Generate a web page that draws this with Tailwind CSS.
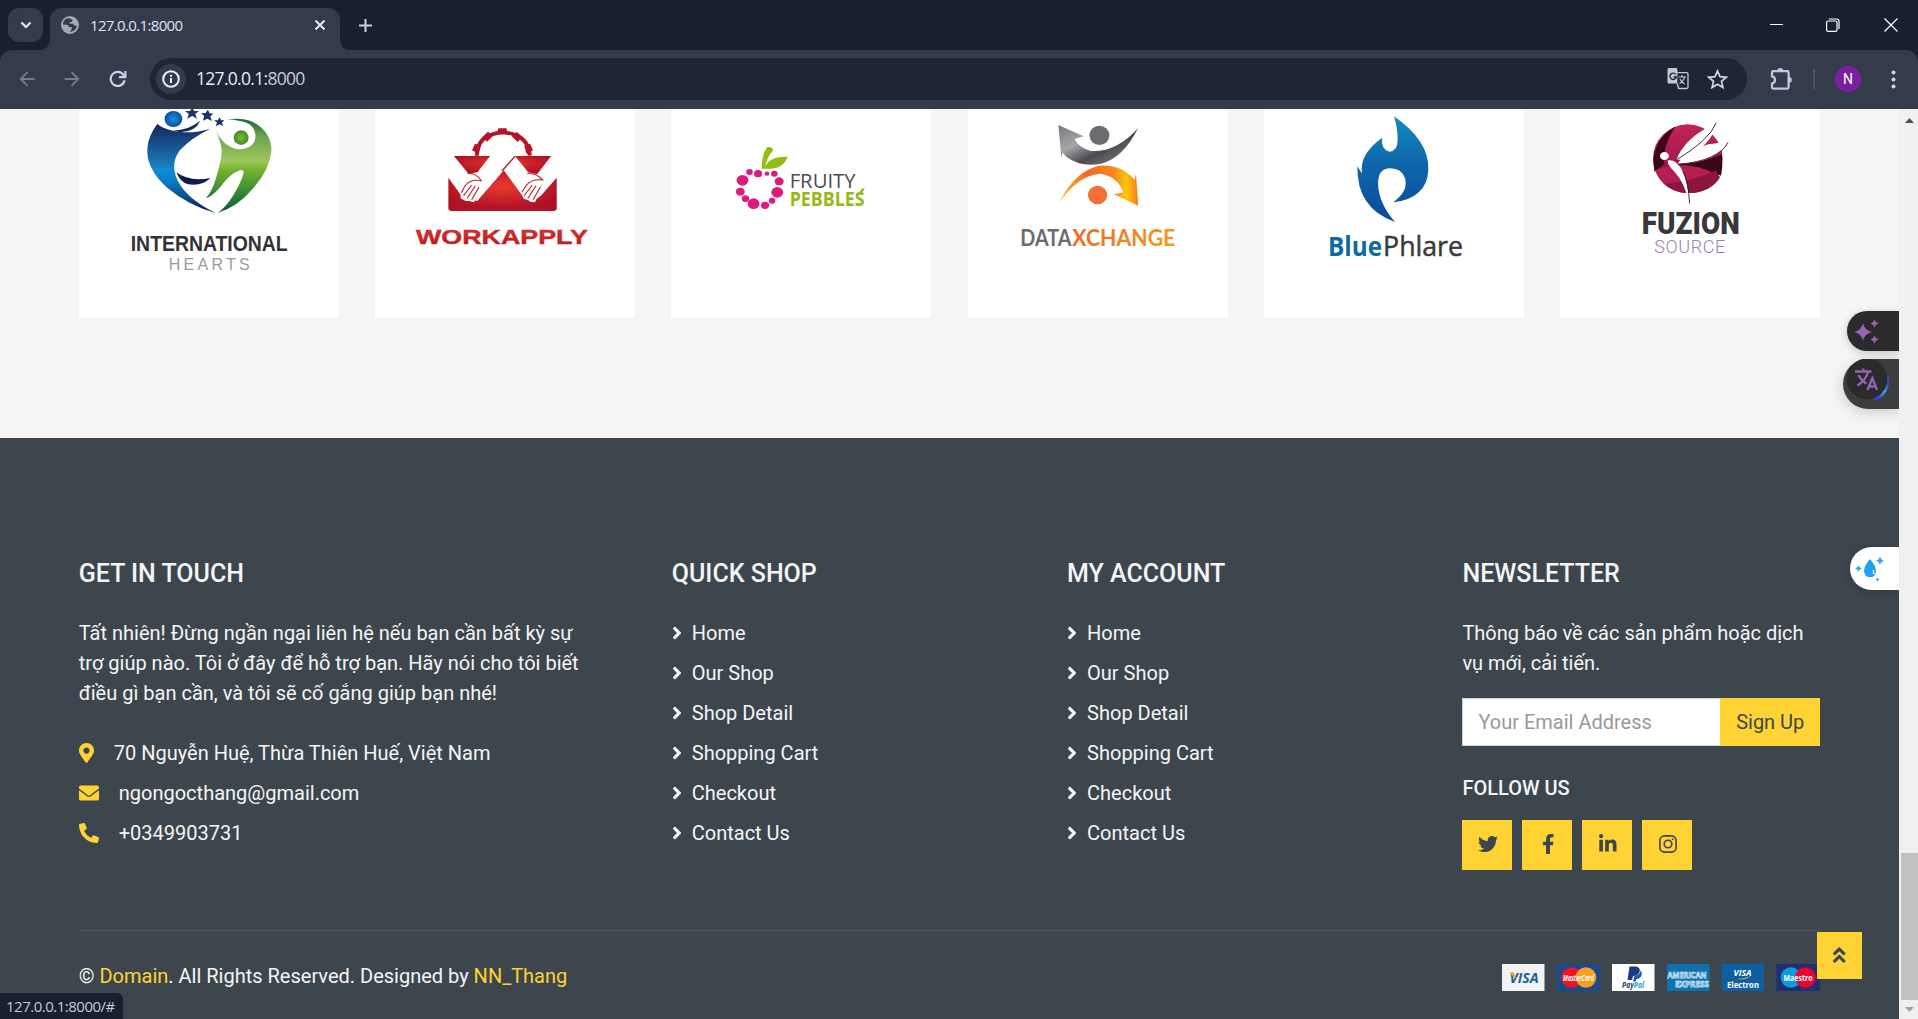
<!DOCTYPE html>
<html lang="vi">
<head>
<meta charset="utf-8">
<title>127.0.0.1:8000</title>
<script src="https://cdn.jsdelivr.net/npm/@tailwindcss/browser@4"></script>
</head>
<body class="h-[1019px] w-[1918px] overflow-hidden bg-[#f5f5f5] font-['Roboto',sans-serif]">
<svg width="0" height="0" class="absolute">
  <defs>
    <symbol id="angle" viewBox="0 0 256 512"><path fill="currentColor" d="M224.3 273l-136 136c-9.4 9.4-24.6 9.4-33.9 0l-22.6-22.6c-9.4-9.4-9.4-24.6 0-33.9l96.4-96.4-96.4-96.4c-9.4-9.4-9.4-24.6 0-33.9L54.3 103c9.4-9.4 24.6-9.4 33.9 0l136 136c9.5 9.4 9.5 24.6.1 34z"/></symbol>
    <linearGradient id="ihBlue" x1="0" y1="0" x2="0" y2="1"><stop offset="0" stop-color="#14275a"/><stop offset=".3" stop-color="#1a5c9c"/><stop offset=".48" stop-color="#1a7dbd"/><stop offset=".5" stop-color="#0d8fd6"/><stop offset=".65" stop-color="#0a7cc4"/><stop offset="1" stop-color="#0b1f55"/></linearGradient>
    <linearGradient id="ihGreen" x1="0" y1="0" x2="0" y2="1"><stop offset="0" stop-color="#1b6b2c"/><stop offset=".2" stop-color="#6fa552"/><stop offset=".45" stop-color="#a0c65a"/><stop offset=".55" stop-color="#6fb32f"/><stop offset=".75" stop-color="#3f8f33"/><stop offset="1" stop-color="#0c5a35"/></linearGradient>
    <radialGradient id="ihBall"><stop offset="0" stop-color="#1492e0"/><stop offset="1" stop-color="#0c4f9a"/></radialGradient>
    <radialGradient id="ihBall2"><stop offset="0" stop-color="#7cc02b"/><stop offset="1" stop-color="#3f8b2a"/></radialGradient>
    <radialGradient id="waRed" cx=".5" cy=".4" r=".55"><stop offset="0" stop-color="#e8392f"/><stop offset="1" stop-color="#b01225"/></radialGradient>
    <linearGradient id="waText" x1="0" y1="0" x2="0" y2="1"><stop offset="0" stop-color="#df3430"/><stop offset="1" stop-color="#b3161c"/></linearGradient>
    <linearGradient id="dxGrey" x1="0" y1="0" x2="1" y2="1"><stop offset="0" stop-color="#77777c"/><stop offset=".35" stop-color="#a5a5aa"/><stop offset=".6" stop-color="#4c4c50"/><stop offset="1" stop-color="#8a8a8e"/></linearGradient>
    <linearGradient id="dxOrange" x1="0" y1="0" x2="1" y2="0"><stop offset="0" stop-color="#f9c21a"/><stop offset=".35" stop-color="#ef6a23"/><stop offset=".7" stop-color="#f58a1f"/><stop offset=".85" stop-color="#fdc60b"/><stop offset="1" stop-color="#f07c1e"/></linearGradient>
    <linearGradient id="dxText" x1="0" y1="0" x2="1" y2="0"><stop offset="0" stop-color="#ee6a25"/><stop offset="1" stop-color="#f59a1d"/></linearGradient>
    <linearGradient id="bpBlue" x1="0" y1="0" x2="0" y2="1"><stop offset="0" stop-color="#0f8cc0"/><stop offset=".45" stop-color="#0f66aa"/><stop offset="1" stop-color="#0a4a9b"/></linearGradient>
    <linearGradient id="fzTop" x1="0" y1="0" x2="0" y2="1"><stop offset="0" stop-color="#c02259"/><stop offset=".5" stop-color="#a81c50"/><stop offset="1" stop-color="#2d0512"/></linearGradient>
  </defs>
</svg>

<div class="flex h-full flex-col">
  <!-- Browser chrome -->
  <header class="shrink-0 bg-[#182030] font-['Open_Sans','Noto_Sans',sans-serif]">
    <div class="flex h-[50px] pt-2">
      <div class="ml-2 flex h-[34px] w-[35px] items-center justify-center rounded-[11px] bg-[#343c4c]">
        <svg width="12" height="8" viewBox="0 0 12 8" fill="none" stroke="#e8eaf2" stroke-width="2.2"><path d="M1.5 1.5 6 6l4.500-4.500"/></svg>
      </div>
      <svg class="ml-[-3px] mt-[30px] h-3 w-[10px]" viewBox="0 0 10 12" fill="#343c4c"><path d="M10 0v12H0C6 12 10 8 10 0z"/></svg>
      <div class="flex h-[42px] w-[290px] items-center rounded-t-xl bg-[#343c4c] pl-[11px] pb-2">
        <svg width="18" height="18" viewBox="0 0 18 18"><circle cx="9" cy="9" r="9" fill="#a5a8ae"/><path d="M8 2.300C4.500 2.300 2 5 2 8.500l3.500.2c1.800 0 2.200 1 2.200 2.300h3v2.300l-2 2.500c3.500.2 6.800-2.500 7.100-6l-2.600-.2-1-1.800H8.800V6h2.300l.3-2.200L8 2.300z" fill="#343c4c"/></svg>
        <span class="ml-[11px] w-[216px] text-[15px] leading-none tracking-[-0.65px] text-[#dfe3ee]">127.0.0.1:8000</span>
        <svg class="ml-[9px]" width="10" height="10" viewBox="0 0 10 10" stroke="#e8eaf2" stroke-width="2"><path d="M.5.5l9 9M9.500.5l-9 9"/></svg>
      </div>
      <svg class="mt-[30px] h-3 w-[10px]" viewBox="0 0 10 12" fill="#343c4c"><path d="M0 0v12h10C4 12 0 8 0 0z"/></svg>
      <svg class="ml-[9px] mt-[11px]" width="13" height="13" viewBox="0 0 13 13" stroke="#c9cfe6" stroke-width="2"><path d="M6.500 0v13M0 6.500h13"/></svg>
      <div class="ml-auto flex h-[33px] items-center pr-5">
        <svg width="13" height="13" viewBox="0 0 13 13" stroke="#fff"><path d="M0 6.500h13"/></svg>
        <svg class="ml-[43px]" width="14" height="14" viewBox="0 0 14 14" fill="none" stroke="#fff" stroke-width="1.200"><rect x=".6" y="3" width="10.400" height="10.400" rx="1.500"/><path d="M3 1h7.500Q13 1 13 3.500V11"/></svg>
        <svg class="ml-[44px]" width="14" height="14" viewBox="0 0 14 14" stroke="#fff" stroke-width="1.200"><path d="M.5.5l13 13M13.500.5l-13 13"/></svg>
      </div>
    </div>
    <div class="flex h-[59px] items-center rounded-t-xl bg-[#343c4c] pb-[1px]">
      <svg class="ml-[19px]" width="16" height="16" viewBox="0 0 16 16" fill="none" stroke="#757c8c" stroke-width="1.800"><path d="M15.500 8H2M8.500 1.200 1.700 8l6.800 6.800"/></svg>
      <svg class="ml-[29px]" width="16" height="16" viewBox="0 0 16 16" fill="none" stroke="#757c8c" stroke-width="1.800"><path d="M.5 8H14M7.500 1.200 14.300 8l-6.800 6.800"/></svg>
      <svg class="ml-[29px]" width="18" height="18" viewBox="0 0 18 18" fill="none" stroke="#c9d0ea" stroke-width="2.200"><path d="M15.600 10.200A7 7 0 1 1 14.500 5L16 7M16.400 1v6.200H10"/></svg>
      <div class="ml-[23px] flex h-[42px] w-[1597px] items-center rounded-full bg-[#1e2636] pl-[6px] pr-[19px]">
        <div class="flex h-[30px] w-[30px] items-center justify-center rounded-full bg-[#343c4c]">
          <svg width="18" height="18" viewBox="0 0 18 18" fill="none" stroke="#eceef6" stroke-width="2"><circle cx="9" cy="9" r="7.800"/><path d="M9 8v5M9 4.700v2"/></svg>
        </div>
        <span class="ml-[10px] text-[17.500px] leading-none tracking-[-0.700px] text-[#e9ecf4]">127.0.0.1:<span class="text-[#c6cbd8]">8000</span></span>
        <svg class="ml-auto" width="22" height="22" viewBox="0 0 22 22"><path d="M2 0h8l2.500 15.500H2A1.500 1.500 0 0 1 .5 14V1.500A1.500 1.500 0 0 1 2 0z" fill="#c7c9d0"/><path d="M10.500 4.700h9a1.500 1.500 0 0 1 1.500 1.500V19a1.500 1.500 0 0 1-1.500 1.500h-7.800l-1.500-5" fill="#1e2636" stroke="#c7c9d0" stroke-width="1.300"/><path d="M11.500 9h7.500M15 7v2M17.500 9c-.5 3-2.500 5-5 6.500M13 11c1 2.500 3 4 4.500 5" fill="none" stroke="#c7c9d0" stroke-width="1.200"/><path d="M8.700 6.300A3.200 3.200 0 1 0 9.300 9H6.500" fill="none" stroke="#1e2636" stroke-width="1.400"/></svg>
        <svg class="ml-[18px]" width="21" height="20" viewBox="0 0 21 20" fill="none" stroke="#d0d2da" stroke-width="1.800"><path d="m10.500 2 2.500 5.700 6.200.6-4.700 4.100 1.400 6.100-5.400-3.200-5.400 3.200 1.400-6.100L1.800 8.300 8 7.700z"/></svg>
      </div>
      <svg class="ml-[23px]" width="23" height="22" viewBox="0 0 23 22"><path d="M2 4.500q0-1.300 1.300-1.300h14q1.300 0 1.300 1.300v14.800q0 1.300-1.300 1.300h-14Q2 20.600 2 19.300V15.500q3-.8 3-3.600T2 8.400z" fill="none" stroke="#bfc8e6" stroke-width="2.200"/><path d="M7.300 3a3 3 0 0 1 6 0zM18.800 9a3 3 0 0 1 0 6z" fill="#bfc8e6"/></svg>
      <div class="ml-5 h-5 w-[2px] bg-[#4b5468]"></div>
      <div class="ml-5 flex h-[26px] w-[26px] items-center justify-center rounded-full bg-[#7b1fa2] font-['Roboto',sans-serif] text-sm text-white">N</div>
      <svg class="ml-[30px]" width="5" height="19" viewBox="0 0 5 19" fill="#ccd3ec"><circle cx="2.500" cy="2.500" r="2"/><circle cx="2.500" cy="9.500" r="2"/><circle cx="2.500" cy="16.500" r="2"/></svg>
    </div>
  </header>

  <div class="flex min-h-0 flex-1">
    <main class="flex w-[1899px] flex-col">
      <!-- Vendor logos -->
      <section class="grid h-[329px] shrink-0 grid-cols-6 gap-x-[36.350px] px-[78.750px] pb-[120px]">
        <div class="bg-white">
          <svg class="h-full w-full" viewBox="78.750 109 260 209">
            <g transform="translate(70 105) scale(.3699 .33333)">
              <circle cx="279" cy="42" r="24" fill="url(#ihBall)"/>
              <g fill="#1b3564"><path d="m330 7 5 11 13 0-10 9 5 14-13-8-14 8 5-14-11-9 14 0z"/><path d="m372 14 5 11 10 1-8 8 4 14-12-7-12 6 3-14-8-8 12-1z"/><path d="m404 37 4 9 9 0-7 7 4 11-10-6-11 6 4-11-8-7 10 0z"/></g>
              <path fill="#14275a" d="M276 76q40 2 76-29-14 33-55 35z"/>
              <path fill="url(#ihBlue)" d="M235 57q20 18 62 24 42 4 82-10-50 26-84 66-22 35-10 75 20 64 107 111-70-20-130-75-60-60-53-122 2-32 26-69z"/>
              <path fill="#0e1c48" d="M287 202q36 30 92 17-22 25-60 19-22-6-32-36z"/>
              <path fill="url(#ihGreen)" fill-rule="evenodd" d="M422 44q40-8 72 7 50 30 50 85-4 60-53 118-40 52-93 70 20-14 42-52 24-44 28-66 4-16-14-8-22 8-50 50-20 26-38 32 18-20 28-61 20-72 14-94-4-24-16-54 20 54 62 62 46-2 47-40-2-40-46-46-16-4-33-3z"/>
              <ellipse cx="462" cy="98" rx="20" ry="22" fill="url(#ihBall2)"/>
            </g>
            <g font-family="Liberation Sans" text-anchor="middle"><text x="209" y="251.500" font-size="21.500" font-weight="700" fill="#333" textLength="157" lengthAdjust="spacingAndGlyphs">INTERNATIONAL</text><text x="209" y="270.500" font-size="16" fill="#9a9a9a" textLength="81" lengthAdjust="spacing">HEARTS</text></g>
          </svg>
        </div>
        <div class="bg-white">
          <svg class="h-full w-full" viewBox="375.040 109 260 209">
            <g transform="translate(70 105) scale(.3699 .33333)">
              <path d="M1100 152q0-64 70-70 70 6 73 70" fill="none" stroke="#b31526" stroke-width="11"/>
              <g fill="#b31526"><path d="M1158 70h22l4 16h-30zM1115 96l15-16 14 12-16 18zM1224 96l-16-15-14 12 16 18zM1087 136l8-20 16 6-6 24zM1252 136l-8-20-16 6 6 24z"/></g>
              <path fill="url(#waRed)" d="M1038 153h98l-34 48-24 6zM1203 153h98l-38 55-24-6z"/>
              <path fill="url(#waRed)" d="M1023 218l34 52 14 8 30 10 72-92 54 82 24 12 22-18 43-54v92q0 8-9 8h-275q-9 0-9-8z"/>
              <path d="m1168 198 35-44" stroke="#c3202a" stroke-width="4"/>
              <path fill="#fff" d="M1056 262q8-34 36-44h22l-8 45-14 29-12-4-10 0-14-8zM1221 262l-10-40 30-16 30 18 8 20-22 48-12-2-8-6-10-2z"/>
              <g stroke="#c3202a" stroke-width="3" fill="none"><path d="M1074 205q24-2 38 22-30-6-44 16l-10 20M1086 240l-22 32M1096 242l-22 38M1106 246l-20 38M1236 205q26 0 42 20-30-4-44 16l-12 20M1250 240l-22 32M1260 242l-22 38M1272 246l-20 38"/></g>
            </g>
            <text x="502" y="244" text-anchor="middle" font-family="Liberation Sans" font-size="19.500" font-weight="700" fill="url(#waText)" stroke="#c4282a" stroke-width=".4" textLength="172" lengthAdjust="spacingAndGlyphs">WORKAPPLY</text>
          </svg>
        </div>
        <div class="bg-white">
          <svg class="h-full w-full" viewBox="671.330 109 260 209">
            <g transform="translate(660 105) scale(.3699 .33333)">
              <path fill="#93bb14" d="M276 191q0-44 15-65 14-2 16 10-18 20-22 55zM285 191q6-38 61-36-12 40-61 36z"/>
              <g fill="#e01a7b"><circle cx="243" cy="201" r="9"/><circle cx="266" cy="206" r="11"/><circle cx="290" cy="206" r="6.500"/><circle cx="310" cy="206" r="9"/><circle cx="224" cy="226" r="16"/><circle cx="323" cy="229" r="12"/><circle cx="218" cy="260" r="12"/><circle cx="318" cy="262" r="16"/><circle cx="232" cy="281" r="10"/><circle cx="304" cy="287" r="9"/><circle cx="254" cy="296" r="16"/><circle cx="285" cy="301" r="11"/></g>
              <path d="M540 268q0-16 14-20-2 14-14 20z" fill="#93bb14"/>
            </g>
            <g font-family="Open Sans"><text x="790" y="188.500" font-size="20" fill="#4a4a50" textLength="66" lengthAdjust="spacingAndGlyphs">FRUITY</text><text x="790" y="206.500" font-size="19.500" font-weight="700" fill="#93bb14" textLength="75" lengthAdjust="spacingAndGlyphs">PEBBLES</text></g>
          </svg>
        </div>
        <div class="bg-white">
          <svg class="h-full w-full" viewBox="967.630 109 260 209">
            <g transform="translate(660 105) scale(.3699 .33333)">
              <path fill="url(#dxGrey)" d="M1076 60l68 34-24 8q10 26 44 36 70 4 128-70-40 90-100 108-54 12-94-20-8-8-10-14l-4 16z"/>
              <ellipse cx="1187" cy="91" rx="27" ry="29" fill="#6c6c70"/>
              <path fill="url(#dxOrange)" d="M1079 292q40-92 106-110 60-6 97 42l4-18 6 96-66-34 26-6q-18-50-64-56-60 6-109 86z"/>
              <ellipse cx="1182" cy="270" rx="26" ry="28" fill="#f36f33"/>
            </g>
            <g font-family="Lato" font-size="22.500" font-weight="700"><text x="1020" y="246.500" fill="#6b6b70" textLength="51" lengthAdjust="spacingAndGlyphs">DATA</text><text x="1072" y="246.500" fill="url(#dxText)" textLength="103" lengthAdjust="spacingAndGlyphs">XCHANGE</text></g>
          </svg>
        </div>
        <div class="bg-white">
          <svg class="h-full w-full" viewBox="1263.920 109 260 209">
            <g transform="translate(1250 105) scale(.3699 .33333)"><path fill="url(#bpBlue)" d="M389 34q96 74 93 160-4 86-95 98 42-34 32-72-10-32-43-30-30 2-30 46 2 60 46 115-104-40-102-167l13 22q-10-56 54-108-4 36 20 42 22-2 22-36 0-36-10-70z"/></g>
            <g font-family="Open Sans" font-size="27"><text x="1328" y="256.500" font-weight="700" fill="#0f6a9e" textLength="54" lengthAdjust="spacingAndGlyphs">Blue</text><text x="1383" y="256.500" fill="#3a3a3c" stroke="#3a3a3c" stroke-width=".5" textLength="80" lengthAdjust="spacingAndGlyphs">Phlare</text></g>
          </svg>
        </div>
        <div class="bg-white">
          <svg class="h-full w-full" viewBox="1560.210 109 260 209">
            <g transform="translate(1250 105) scale(.3699 .33333)">
              <ellipse cx="1184" cy="161" rx="94" ry="103" fill="url(#fzTop)"/>
              <path fill="#3b0718" d="M1094 200q-14-90 56-135-36 64-30 112zM1150 178q70-2 126-30 4 30-2 64-60-30-124-34z"/>
              <path fill="#b51e55" d="M1096 196q40-20 90-14 50 6 86 34-26 48-88 48-64-2-88-68z"/>
              <path fill="#8c1540" d="M1120 236q80-6 140-40l10 20q-20 40-70 48-50 0-80-28z"/>
              <g fill="#fff"><circle cx="1121" cy="153" r="12"/><path d="M1130 166q20-4 36 24 20 40 22 106-12-64-40-96-20-20-18-34zM1153 165q20-58 82-96 14-8 26-18-2 44-48 84-36 30-60 30zM1157 176q20-36 82-58 40-6 54-8-20 38-62 54-40 14-74 12z"/></g>
              <path fill="none" stroke="#3b0718" stroke-width="2.500" d="M1153 165q90-60 108-112M1157 178q110-10 136-66M1172 200q14 30 17 95"/>
            </g>
            <g text-anchor="middle"><text x="1691" y="234" font-family="Roboto" font-weight="900" font-size="31.500" fill="#38383a" textLength="98" lengthAdjust="spacingAndGlyphs">FUZION</text><text x="1690" y="253.500" font-family="Roboto" font-weight="300" font-size="18" fill="#a27bb5" textLength="71" lengthAdjust="spacing">SOURCE</text></g>
          </svg>
        </div>
      </section>

      <!-- Footer -->
      <footer class="flex-1 bg-[#3d464d] px-[60px] pt-[120px] text-[20px] leading-[30px] text-[#f5f5f5]">
        <div class="grid h-[372px] grid-cols-[593px_395.330px_395.330px_395.330px]">
          <div class="px-[18.750px]">
            <h5 class="mb-[29px] pt-[1px] text-[25px] font-medium">GET IN TOUCH</h5>
            <p class="mb-[30px] whitespace-nowrap">Tất nhiên! Đừng ngần ngại liên hệ nếu bạn cần bất kỳ sự<br>trợ giúp nào. Tôi ở đây để hỗ trợ bạn. Hãy nói cho tôi biết<br>điều gì bạn cần, và tôi sẽ cố gắng giúp bạn nhé!</p>
            <ul class="flex flex-col gap-[10px]">
              <li class="flex items-center gap-5"><svg class="h-5 w-[15px] text-[#ffd333]" viewBox="0 0 384 512" fill="currentColor"><path d="M172.268 501.670C26.970 291.031 0 269.413 0 192 0 85.961 85.961 0 192 0s192 85.961 192 192c0 77.413-26.970 99.031-172.268 309.670-9.535 13.774-29.930 13.773-39.464 0zM192 272c44.183 0 80-35.817 80-80s-35.817-80-80-80-80 35.817-80 80 35.817 80 80 80z"/></svg>70 Nguyễn Huệ, Thừa Thiên Huế, Việt Nam</li>
              <li class="flex items-center gap-5"><svg class="size-5 text-[#ffd333]" viewBox="0 0 512 512" fill="currentColor"><path d="M502.300 190.800c3.900-3.100 9.700-.2 9.700 4.700V400c0 26.500-21.500 48-48 48H48c-26.500 0-48-21.500-48-48V195.600c0-5 5.700-7.800 9.700-4.700 22.400 17.400 52.100 39.500 154.100 113.600 21.100 15.400 56.700 47.800 92.200 47.600 35.700.3 72-32.800 92.300-47.600 102-74.100 131.600-96.300 154-113.700zM256 320c23.200.4 56.600-29.200 73.400-41.400 132.700-96.300 142.800-104.700 173.400-128.700 5.800-4.500 9.200-11.500 9.200-18.900v-19c0-26.500-21.500-48-48-48H48c-26.500 0-48 21.500-48 48v19c0 7.400 3.400 14.300 9.200 18.900 30.600 23.900 40.700 32.400 173.400 128.700 16.800 12.200 50.200 41.800 73.400 41.400z"/></svg>ngongocthang@gmail.com</li>
              <li class="flex items-center gap-5"><svg class="size-5 text-[#ffd333]" viewBox="0 0 512 512" fill="currentColor"><path d="M497.390 361.800l-112-48a24 24 0 0 0-28 6.900l-49.600 60.600A370.660 370.660 0 0 1 130.600 204.110l60.600-49.600a23.940 23.940 0 0 0 6.900-28l-48-112A24.160 24.160 0 0 0 122.600.61l-104 24A24 24 0 0 0 0 48c0 256.500 207.900 464 464 464a24 24 0 0 0 23.400-18.600l24-104a24.290 24.290 0 0 0-14.010-27.600z"/></svg>+0349903731</li>
            </ul>
          </div>
          <div class="px-[18.750px]">
            <h5 class="mb-[29px] pt-[1px] text-[25px] font-medium">QUICK SHOP</h5>
            <ul class="flex flex-col gap-[10px]">
              <li class="flex items-center gap-[10px]"><svg class="h-5 w-[10px]"><use href="#angle"/></svg>Home</li>
              <li class="flex items-center gap-[10px]"><svg class="h-5 w-[10px]"><use href="#angle"/></svg>Our Shop</li>
              <li class="flex items-center gap-[10px]"><svg class="h-5 w-[10px]"><use href="#angle"/></svg>Shop Detail</li>
              <li class="flex items-center gap-[10px]"><svg class="h-5 w-[10px]"><use href="#angle"/></svg>Shopping Cart</li>
              <li class="flex items-center gap-[10px]"><svg class="h-5 w-[10px]"><use href="#angle"/></svg>Checkout</li>
              <li class="flex items-center gap-[10px]"><svg class="h-5 w-[10px]"><use href="#angle"/></svg>Contact Us</li>
            </ul>
          </div>
          <div class="px-[18.750px]">
            <h5 class="mb-[29px] pt-[1px] text-[25px] font-medium">MY ACCOUNT</h5>
            <ul class="flex flex-col gap-[10px]">
              <li class="flex items-center gap-[10px]"><svg class="h-5 w-[10px]"><use href="#angle"/></svg>Home</li>
              <li class="flex items-center gap-[10px]"><svg class="h-5 w-[10px]"><use href="#angle"/></svg>Our Shop</li>
              <li class="flex items-center gap-[10px]"><svg class="h-5 w-[10px]"><use href="#angle"/></svg>Shop Detail</li>
              <li class="flex items-center gap-[10px]"><svg class="h-5 w-[10px]"><use href="#angle"/></svg>Shopping Cart</li>
              <li class="flex items-center gap-[10px]"><svg class="h-5 w-[10px]"><use href="#angle"/></svg>Checkout</li>
              <li class="flex items-center gap-[10px]"><svg class="h-5 w-[10px]"><use href="#angle"/></svg>Contact Us</li>
            </ul>
          </div>
          <div class="px-[18.750px]">
            <h5 class="mb-[29px] pt-[1px] text-[25px] font-medium">NEWSLETTER</h5>
            <p class="mb-5 whitespace-nowrap">Thông báo về các sản phẩm hoặc dịch<br>vụ mới, cải tiến.</p>
            <div class="flex h-[47.500px]">
              <div class="flex flex-1 items-center border border-r-0 border-[#ced4da] bg-white pl-[15px] text-[#999]">Your Email Address</div>
              <div class="flex w-[100px] items-center justify-center bg-[#ffd333] text-[#3d464d]">Sign Up</div>
            </div>
            <h6 class="mb-5 mt-[30px] text-[20px] font-medium leading-6">FOLLOW US</h6>
            <div class="flex gap-[10px] text-[#3d464d]">
              <div class="flex size-[50px] items-center justify-center bg-[#ffd333] pl-[1px] pb-[1px]"><svg class="size-5" viewBox="0 0 512 512" fill="currentColor"><path d="M459.370 151.716c.325 4.548.325 9.097.325 13.645 0 138.720-105.583 298.558-298.558 298.558-59.452 0-114.680-17.219-161.137-47.106 8.447.974 16.568 1.299 25.340 1.299 49.055 0 94.213-16.568 130.274-44.832-46.132-.975-84.792-31.188-98.112-72.772 6.498.974 12.995 1.624 19.818 1.624 9.421 0 18.843-1.300 27.614-3.573-48.081-9.747-84.143-51.980-84.143-102.985v-1.299c13.969 7.797 30.214 12.670 47.431 13.319-28.264-18.843-46.781-51.005-46.781-87.391 0-19.492 5.197-37.360 14.294-52.954 51.655 63.675 129.300 105.258 216.365 109.807-1.624-7.797-2.599-15.918-2.599-24.040 0-57.828 46.782-104.934 104.934-104.934 30.213 0 57.502 12.670 76.670 33.137 23.715-4.548 46.456-13.320 66.599-25.340-7.798 24.366-24.366 44.833-46.132 57.827 21.117-2.273 41.584-8.122 60.426-16.243-14.292 20.791-32.161 39.308-52.628 54.253z"/></svg></div>
              <div class="flex size-[50px] items-center justify-center bg-[#ffd333] pl-[1px] pb-[1px]"><svg class="h-5 w-[12.500px]" viewBox="0 0 320 512" fill="currentColor"><path d="M279.140 288l14.220-92.660h-88.910v-60.130c0-25.350 12.420-50.060 52.240-50.060h40.420V6.260S260.430 0 225.360 0c-73.220 0-121.080 44.380-121.080 124.720v70.620H22.890V288h81.390v224h100.170V288z"/></svg></div>
              <div class="flex size-[50px] items-center justify-center bg-[#ffd333] pl-[1px] pb-[1px]"><svg class="h-5 w-[17.500px]" viewBox="0 0 448 512" fill="currentColor"><path d="M100.280 448H7.400V148.900h92.880zM53.790 108.100C24.090 108.100 0 83.500 0 53.800a53.790 53.790 0 0 1 107.580 0c0 29.700-24.100 54.300-53.790 54.300zM447.900 448h-92.680V302.400c0-34.700-.7-79.200-48.290-79.200-48.290 0-55.690 37.700-55.690 76.700V448h-92.780V148.900h89.080v40.800h1.300c12.400-23.500 42.690-48.300 87.880-48.300 94 0 111.280 61.900 111.280 142.300V448z"/></svg></div>
              <div class="flex size-[50px] items-center justify-center bg-[#ffd333] pl-[1px] pb-[1px]"><svg class="size-[18px]" viewBox="0 0 18 18" fill="none" stroke="currentColor" stroke-width="1.600"><rect x=".9" y=".9" width="16.200" height="16.200" rx="4.600"/><circle cx="9" cy="9" r="3.800"/><circle cx="13.700" cy="4.300" r="1.050" fill="currentColor" stroke="none"/></svg></div>
            </div>
          </div>
        </div>
        <div class="mx-[18.750px] flex justify-between border-t border-[#50555f] pt-[30px]">
          <p>© <span class="text-[#ffd333]">Domain</span>. All Rights Reserved. Designed by <span class="text-[#ffd333]">NN_Thang</span></p>
          <svg class="mt-[3px]" width="318" height="27" viewBox="0 0 318 27" font-family="Open Sans" font-weight="700" text-anchor="middle">
            <rect width="42.500" height="27" fill="#f3f3f3"/><text x="22" y="18.500" font-size="13.500" font-style="italic" fill="#15629c" textLength="29" lengthAdjust="spacingAndGlyphs">VISA</text><path d="M7 8.500h5l2 6z" fill="#e9a52b"/>
            <rect x="55" width="42.500" height="27" fill="#1a4a8c"/><circle cx="69.500" cy="13.500" r="10.300" fill="#f0141e"/><circle cx="84" cy="13.500" r="10.300" fill="#f6a01e"/><text x="76.500" y="16.500" font-size="8" font-style="italic" fill="#fff" textLength="31" lengthAdjust="spacingAndGlyphs">MasterCard</text>
            <rect x="110" width="42.500" height="27" fill="#fff"/><path d="M127.500 2.500h6.500q5 1 3.500 5.500-1.500 4-6.500 4l-1 4h-4.500z" fill="#1c3a80"/><path d="M131 17.500l1.500-6q5 0 6-5 2 2 1 5-1.500 3.500-5 3.500l-.8 2.500z" fill="#1c5ca8"/><text x="131" y="23.500" font-size="8" font-style="italic" fill="#1c3a80" textLength="22" lengthAdjust="spacingAndGlyphs">Pay<tspan fill="#2a9bdc">Pal</tspan></text>
            <rect x="165" width="42.500" height="27" fill="#0f72ae"/><g fill="#1878b4" stroke="#d8ecf8" stroke-width=".75" font-size="9"><text x="185" y="13.500" textLength="39" lengthAdjust="spacingAndGlyphs">AMERICAN</text><text x="190" y="22.500" textLength="34" lengthAdjust="spacingAndGlyphs">EXPRESS</text></g>
            <rect x="219.500" width="42.500" height="27" fill="#0d5fa0"/><text x="240.500" y="11.500" font-size="9" font-style="italic" fill="#fff" textLength="18" lengthAdjust="spacingAndGlyphs">VISA</text><path d="M234 15q8 0 15-3-4 3.500-10 3.500z" fill="#d59b3a"/><text x="241" y="23.500" font-size="8.500" fill="#fff" textLength="32" lengthAdjust="spacingAndGlyphs">Electron</text>
            <rect x="274.500" width="43.500" height="27" fill="#1f2f72"/><circle cx="289" cy="13.500" r="10.300" fill="#0e9ade"/><circle cx="303.500" cy="13.500" r="10.300" fill="#e8052f"/><text x="296" y="17" font-size="9" fill="#fff" textLength="29" lengthAdjust="spacingAndGlyphs">Maestro</text>
          </svg>
        </div>
      </footer>
    </main>

    <!-- Scrollbar -->
    <div class="flex w-[19px] flex-col items-center bg-[#f0f0f0] pt-[9px] pl-[2px]">
      <svg width="9" height="5" viewBox="0 0 9 5" fill="#505050"><path d="M4.500 0 9 5H0z"/></svg>
      <div class="mt-[730px] h-[147px] w-full bg-[#c1c1c1]"></div>
      <svg class="mt-[7px]" width="9" height="5" viewBox="0 0 9 5" fill="#a3a3a3"><path d="M0 0h9L4.500 5z"/></svg>
    </div>
  </div>
</div>

<!-- Floating widgets -->
<div class="absolute left-[1847px] top-[311px] h-10 w-[52px] rounded-l-full bg-[#2b2b2b] shadow-[0_2px_8px_rgba(0,0,0,.2)] [clip-path:inset(-15px_0_-15px_-15px)]">
  <svg class="ml-[7px] mt-2" width="26" height="26" viewBox="0 0 26 26" fill="#9564b4"><path d="M9 4q1.500 7.500 9 9-7.500 1.500-9 9-1.500-7.500-9-9 7.500-1.500 9-9zM20.500 0q.8 3.800 4.500 4.500-3.700.8-4.500 4.500-.8-3.700-4.500-4.500 3.700-.7 4.500-4.500zM20.500 16q.8 3.800 4.500 4.500-3.700.8-4.500 4.500-.8-3.700-4.500-4.500 3.700-.7 4.500-4.500z"/></svg>
</div>
<div class="absolute left-[1843px] top-[359px] h-[50px] w-[56px] rounded-l-full bg-[#3c3d3e] shadow-[0_3px_14px_rgba(0,0,0,.18)] [clip-path:inset(-30px_0_-30px_-30px)]">
  <svg width="56" height="50" viewBox="0 0 56 50"><defs><linearGradient id="ring" x1="1" y1=".4" x2=".5" y2="1"><stop offset="0" stop-color="#4a3ff0"/><stop offset=".45" stop-color="#2fb4e0"/><stop offset="1" stop-color="#3a3ff0"/></linearGradient></defs><path d="M44.500 17A20.500 20.500 0 0 1 29 39.500q3 1 6 0.300A20 20 0 0 0 44.500 17z" fill="url(#ring)" stroke="url(#ring)" stroke-width="1.500"/><circle cx="24" cy="20" r="20.500" fill="#2b2b2b"/><g fill="none" stroke="#9564b4" stroke-width="2.300"><path d="M12 12.500h16.500M20.300 9.500v3M25 13q-2 8-10.500 13.500M15.500 16q3 6 8 8.500"/><path d="m24.500 31 4.800-12 4.800 12M26 27.500h6.600"/></g></svg>
</div>
<div class="absolute left-[1850px] top-[547px] h-[43px] w-[49px] rounded-l-full bg-white shadow-[0_2px_8px_rgba(0,0,0,.2)] [clip-path:inset(-15px_0_-15px_-15px)]">
  <svg width="49" height="43" viewBox="0 0 49 43"><path d="M20 12q6 7 6 12a6 6.300 0 0 1-12 0q0-5 6-12z" fill="#1da1f2"/><path d="M23.500 23v4" stroke="#fff" stroke-width="1.500"/><path d="M30 9q.6 4 4.500 4.800-3.900.6-4.500 4.700-.6-4.100-4.500-4.700 3.900-.8 4.500-4.800zM8.500 18q.5 3 3.300 3.500-2.800.5-3.300 3.500-.5-3-3.300-3.500 2.800-.5 3.300-3.500zM27.500 30q.3 2.200 2 2.500-1.700.3-2 2.500-.3-2.200-2-2.500 1.700-.3 2-2.500z" fill="#2fa9f3"/></svg>
</div>
<div class="absolute left-[1817px] top-[932px] flex h-[47px] w-[45px] items-center justify-center bg-[#ffd333]">
  <svg class="mt-[-1px] h-5 w-[12.500px]" viewBox="0 0 320 512" fill="#3d464d"><path d="M177 255.700l136 136c9.400 9.400 9.400 24.600 0 33.900l-22.600 22.600c-9.400 9.400-24.600 9.400-33.900 0L160 351.900l-96.400 96.400c-9.400 9.400-24.600 9.400-33.900 0L7 425.700c-9.400-9.400-9.400-24.600 0-33.900l136-136c9.400-9.500 24.600-9.500 34-.1zm-34-192L7 199.700c-9.400 9.400-9.400 24.600 0 33.900l22.600 22.600c9.400 9.400 24.600 9.400 33.900 0l96.400-96.400 96.400 96.400c9.400 9.400 24.600 9.400 33.900 0l22.600-22.600c9.400-9.400 9.400-24.600 0-33.900l-136-136c-9.200-9.400-24.400-9.400-33.800 0z"/></svg>
</div>
<div class="absolute left-0 top-[993px] flex h-[26px] w-[123px] items-center rounded-tr-md bg-[#182030] pl-[6px] font-['Open_Sans',sans-serif] text-[15px] tracking-[-0.5px] text-[#c3c9da]">127.0.0.1:8000/#</div>
</body>
</html>
